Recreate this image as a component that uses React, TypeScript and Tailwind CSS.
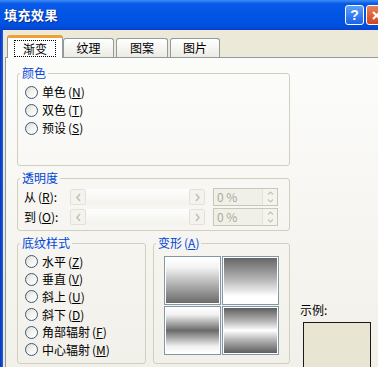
import React from "react";

const font = "font-['Noto_Sans_CJK_SC','Noto_Sans',sans-serif]";

function Key({ k }: { k: string }) {
  return (
    <span className="ml-[2px]">
      (<span className="underline">{k}</span>)
    </span>
  );
}

function Radio({ label, k, h = "h-[18px]" }: { label: string; k: string; h?: string }) {
  return (
    <div className={`flex items-center ${h} pl-[7px]`}>
      <span className="w-[13px] h-[13px] rounded-full border border-[#3a5a7c] bg-[linear-gradient(135deg,#dcdad0_0%,#f4f3ee_50%,#ffffff_100%)] shrink-0" />
      <span className="ml-[4px] leading-[14px]">
        {label}
        <Key k={k} />
      </span>
    </div>
  );
}

function Group({ title, className, children }: { title: React.ReactNode; className?: string; children?: React.ReactNode }) {
  return (
    <fieldset className={`border border-[#d0d0bf] rounded-[3px] shrink-0 ${className ?? ""}`}>
      <legend className="ml-[2px] px-[2px] text-[#0046d5] leading-[14px]">{title}</legend>
      {children}
    </fieldset>
  );
}

function Chevron({ dir }: { dir: "left" | "right" }) {
  return (
    <svg width="7" height="9" viewBox="0 0 7 9">
      <path d={dir === "left" ? "M5 1 L2 4.5 L5 8" : "M2 1 L5 4.5 L2 8"} stroke="#c4c2b6" strokeWidth="1.6" fill="none" />
    </svg>
  );
}

function ScrollRow({ label, k }: { label: string; k: string }) {
  return (
    <div className="flex items-center h-[20px] pl-[6px]">
      <span className="w-[46px] leading-[14px]">
        {label}
        <Key k={k} />:
      </span>
      <div className="w-[135px] h-[16px] flex bg-[linear-gradient(to_bottom,#fefefe,#f3f2ec)]">
        <div className="w-[16px] h-[16px] border border-[#e4e2d8] rounded-[2px] bg-[#f4f3ee] flex items-center justify-center">
          <Chevron dir="left" />
        </div>
        <div className="flex-1" />
        <div className="w-[16px] h-[16px] border border-[#e4e2d8] rounded-[2px] bg-[#f4f3ee] flex items-center justify-center">
          <Chevron dir="right" />
        </div>
      </div>
      <div className="ml-[8px] w-[65px] h-[18px] border border-[#c9c7ba] bg-[#f1f0e8] flex items-center">
        <span className="flex-1 pl-[3px] text-[#aca899] leading-[14px]">0 %</span>
        <div className="w-[15px] h-[16px] flex flex-col border-l border-[#e4e2d8] bg-[#f4f3ee]">
          <div className="flex-1 flex items-center justify-center">
            <svg width="7" height="4" viewBox="0 0 7 4"><path d="M1 3.5 L3.5 1 L6 3.5" stroke="#c4c2b6" strokeWidth="1.2" fill="none" /></svg>
          </div>
          <div className="flex-1 flex items-center justify-center">
            <svg width="7" height="4" viewBox="0 0 7 4"><path d="M1 0.5 L3.5 3 L6 0.5" stroke="#c4c2b6" strokeWidth="1.2" fill="none" /></svg>
          </div>
        </div>
      </div>
    </div>
  );
}

function Tile({ bg }: { bg: string }) {
  return (
    <div className="w-[57px] h-[49px] border border-[#8497a6] p-[1px] bg-white">
      <div className={`w-full h-full ${bg}`} />
    </div>
  );
}

export default function App() {
  return (
    <div className={`w-[378px] h-[367px] overflow-hidden flex flex-col bg-[#ece9d8] text-[12px] text-black ${font}`}>
      {/* title bar */}
      <div className="h-[30px] w-[378px] overflow-hidden shrink-0">
        <div className="w-[390px] h-full flex items-center pl-[4px] pr-[3px] bg-[linear-gradient(to_bottom,#3d8ef6_0%,#0a5ae8_12%,#0055e5_50%,#0050e0_85%,#0a40cc_100%)]">
          <span className="text-white font-bold text-[13px] tracking-[0.5px] [text-shadow:1px_1px_0_#0a2a8a]">填充效果</span>
          <div className="flex-1" />
          <div className="w-[19px] h-[20px] rounded-[3px] border border-white bg-[linear-gradient(to_bottom,#5da0fa,#1a62ea)] flex items-center justify-center text-white font-bold text-[14px] leading-none font-['Liberation_Sans',sans-serif]">
            ?
          </div>
          <div className="ml-[2px] w-[21px] h-[20px] rounded-[3px] border border-white bg-[linear-gradient(to_bottom,#e8805a,#d2461e)] flex items-center justify-center">
            <svg width="9" height="9" viewBox="0 0 9 9">
              <path d="M1 1 L8 8 M8 1 L1 8" stroke="#ffffff" strokeWidth="2" />
            </svg>
          </div>
        </div>
      </div>

      <div className="flex-1 flex min-h-0">
        <div className="w-[3px] bg-[linear-gradient(to_right,#0a36b8,#1a5fe6)]" />
        <div className="flex-1 pl-[2px] pt-[5px] min-w-0">
          {/* tabs */}
          <div className="flex items-end h-[22px] pl-[2px]">
            <div className="relative z-10 w-[56px] h-[23px] -mb-px bg-white border-x border-[#919b9c] border-t-[3px] border-t-[#f0a030] rounded-t-[3px] flex items-center justify-center">
              <span className="border border-dotted border-black px-[8px] leading-[15px]">渐变</span>
            </div>
            <div className="w-[51px] h-[19px] border border-b-0 border-[#919b9c] rounded-t-[3px] bg-[linear-gradient(to_bottom,#ffffff,#ecebe4)] flex items-center justify-center leading-[14px]">纹理</div>
            <div className="ml-[2px] w-[52px] h-[19px] border border-b-0 border-[#919b9c] rounded-t-[3px] bg-[linear-gradient(to_bottom,#ffffff,#ecebe4)] flex items-center justify-center leading-[14px]">图案</div>
            <div className="ml-[2px] w-[50px] h-[19px] border border-b-0 border-[#919b9c] rounded-t-[3px] bg-[linear-gradient(to_bottom,#ffffff,#ecebe4)] flex items-center justify-center leading-[14px]">图片</div>
          </div>

          {/* panel */}
          <div className="w-[400px] h-[330px] border border-[#919b9c] bg-[linear-gradient(to_bottom,#fcfcfb,#f1efe8)] pl-[11px] pt-[8px] flex flex-col">
            <Group title="颜色" className="w-[273px] h-[100px]">
              <div className="mt-[3px]">
                <Radio label="单色" k="N" />
                <Radio label="双色" k="T" />
                <Radio label="预设" k="S" />
              </div>
            </Group>

            <Group title="透明度" className="mt-[5px] w-[273px] h-[60px]">
              <div className="mt-[2px]">
                <ScrollRow label="从" k="R" />
                <ScrollRow label="到" k="O" />
              </div>
            </Group>

            <div className="mt-[5px] flex items-start">
              <Group title="底纹样式" className="w-[129px] h-[128px]">
                <div className="mt-[3px]">
                  <Radio label="水平" k="Z" h="h-[17.6px]" />
                  <Radio label="垂直" k="V" h="h-[17.6px]" />
                  <Radio label="斜上" k="U" h="h-[17.6px]" />
                  <Radio label="斜下" k="D" h="h-[17.6px]" />
                  <Radio label="角部辐射" k="F" h="h-[17.6px]" />
                  <Radio label="中心辐射" k="M" h="h-[17.6px]" />
                </div>
              </Group>

              <Group
                title={
                  <>
                    变形<Key k="A" />
                  </>
                }
                className="ml-[7px] w-[137px] h-[128px]"
              >
                <div className="mt-[6px] pl-[10px] grid grid-cols-[57px_57px] gap-[1px]">
                  <Tile bg="bg-[linear-gradient(to_bottom,#ffffff_0%,#f4f4f4_20%,#6a6a6a_100%)]" />
                  <Tile bg="bg-[linear-gradient(to_bottom,#666666_0%,#b0b0b0_45%,#ffffff_85%,#ffffff_100%)]" />
                  <Tile bg="bg-[linear-gradient(to_bottom,#ffffff_0%,#f0f0f0_15%,#6a6a6a_50%,#f0f0f0_85%,#ffffff_100%)]" />
                  <Tile bg="bg-[linear-gradient(to_bottom,#5e5e5e_0%,#b8b8b8_30%,#ffffff_50%,#b8b8b8_70%,#5e5e5e_100%)]" />
                </div>
              </Group>

              <div className="ml-[10px] flex flex-col">
                <span className="mt-[67px] leading-[14px]">示例:</span>
                <div className="mt-[5px] ml-[3px] w-[68px] h-[60px] border border-[#1a1a1a] bg-[#e8e5d3]" />
              </div>
            </div>
          </div>
        </div>
      </div>
    </div>
  );
}
